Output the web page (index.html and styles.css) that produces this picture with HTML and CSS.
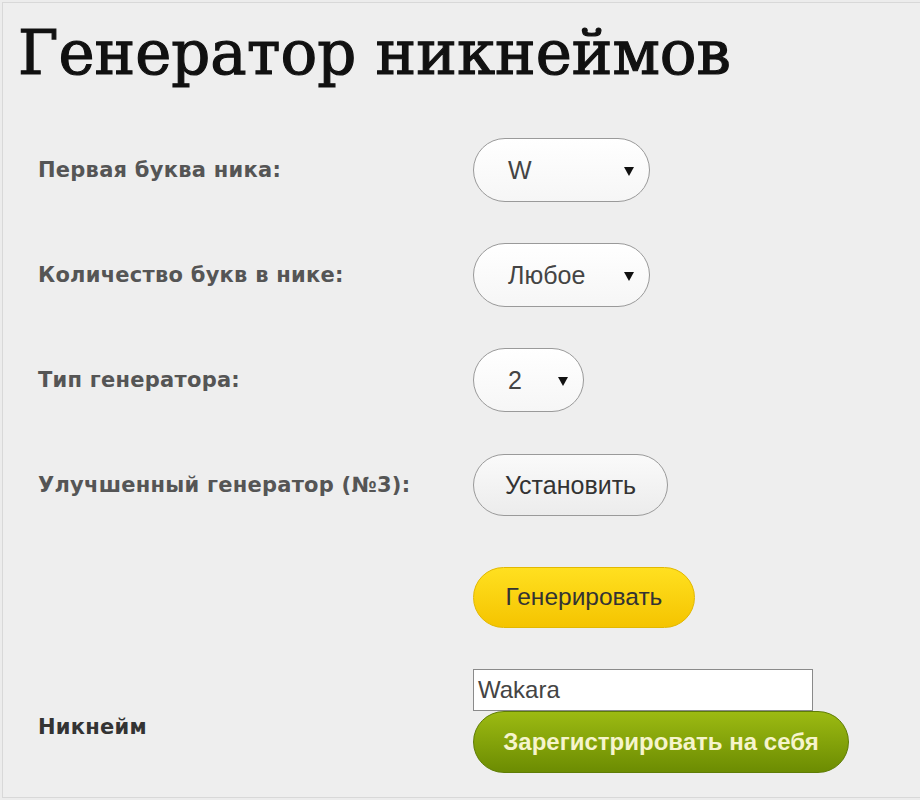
FILE: index.html
```html
<!DOCTYPE html>
<html lang="ru">
<head>
<meta charset="utf-8">
<title>Генератор никнеймов</title>
<link rel="stylesheet" href="styles.css">
</head>
<body>
<div class="page">
  <h1 class="title">Генератор никнеймов</h1>
  <div class="form">
    <div class="row">
      <div class="label">Первая буква ника:</div>
      <div class="select w177"><span class="val">W</span><svg class="arrow" width="10" height="9" viewBox="0 0 10 9"><path d="M0 0H10L5 9Z" fill="#111"/></svg></div>
    </div>
    <div class="row">
      <div class="label">Количество букв в нике:</div>
      <div class="select w177"><span class="val">Любое</span><svg class="arrow" width="10" height="9" viewBox="0 0 10 9"><path d="M0 0H10L5 9Z" fill="#111"/></svg></div>
    </div>
    <div class="row">
      <div class="label">Тип генератора:</div>
      <div class="select w111"><span class="val">2</span><svg class="arrow" width="10" height="9" viewBox="0 0 10 9"><path d="M0 0H10L5 9Z" fill="#111"/></svg></div>
    </div>
    <div class="row">
      <div class="label">Улучшенный генератор (№3):</div>
      <div class="btn btn-light">Установить</div>
    </div>
    <div class="row row-gen">
      <div class="label"></div>
      <div class="btn btn-yellow">Генерировать</div>
    </div>
    <div class="row row-nick">
      <div class="label nick-label">Никнейм</div>
      <div class="nick-col">
        <div class="input">Wakara</div>
        <div class="btn btn-green">Зарегистрировать на себя</div>
      </div>
    </div>
  </div>
</div>
</body>
</html>
```

FILE: styles.css
```css
html, body {
  margin: 0;
  padding: 0;
  background: #ececec;
}
body {
  padding: 2px 0 2px 2px;
  height: 800px;
  box-sizing: border-box;
}
.page {
  height: 796px;
  box-sizing: border-box;
  border-top: 1px solid #d8d8d8;
  border-left: 1px solid #d8d8d8;
  border-bottom: 1px solid #d8d8d8;
  background: #eeeeee;
  padding: 0 0 0 15px;
}
.title {
  margin: 0;
  padding-top: 14px;
  font-family: "DejaVu Serif", serif;
  font-weight: normal;
  font-size: 61px;
  line-height: 72px;
  color: #111;
  -webkit-text-stroke: 1.2px #111;
}
.form {
  padding-top: 49px;
  padding-left: 20px;
  display: flex;
  flex-direction: column;
}
.row {
  display: flex;
  align-items: center;
  height: 64px;
  margin-bottom: 41px;
}
.row-gen { margin-top: 7px; margin-bottom: 40px; }
.label {
  width: 435px;
  flex: none;
  font-family: "DejaVu Sans", Verdana, sans-serif;
  font-weight: bold;
  font-size: 21px;
  letter-spacing: 0.25px;
  color: #555;
}
.nick-label { color: #333; padding-top: 46px; }
.row-nick { height: auto; align-items: flex-start; }
.select {
  box-sizing: border-box;
  height: 64px;
  border: 1px solid #9a9a9a;
  border-radius: 32px;
  background: linear-gradient(#ffffff, #f6f6f6);
  display: flex;
  align-items: center;
  justify-content: space-between;
  padding: 0 15px 0 34px;
  font-family: "Liberation Sans", Arial, sans-serif;
  font-size: 25px;
  color: #444;
}
.w177 { width: 177px; }
.w111 { width: 111px; }
.arrow { flex: none; margin-top: 2px; }
.btn {
  box-sizing: border-box;
  height: 62px;
  border-radius: 31px;
  display: flex;
  align-items: center;
  justify-content: center;
  font-family: "Liberation Sans", Arial, sans-serif;
  font-size: 25px;
}
.btn-light {
  width: 195px;
  border: 1px solid #9a9a9a;
  background: linear-gradient(#fafafa, #ececec);
  color: #333;
}
.btn-yellow {
  width: 222px;
  height: 61px;
  border: 1px solid #e2b800;
  background: linear-gradient(#ffe020, #f5c400);
  color: #333;
  font-size: 24.5px;
}
.nick-col {
  display: flex;
  flex-direction: column;
}
.input {
  box-sizing: border-box;
  width: 340px;
  height: 42px;
  border: 1px solid #8a8a8a;
  background: #fff;
  font-family: "Liberation Sans", Arial, sans-serif;
  font-size: 24px;
  color: #444;
  padding: 5px 4px;
  line-height: 30px;
}
.btn-green {
  width: 376px;
  height: 62px;
  border: 1px solid #5f7d05;
  background: linear-gradient(#9cba12, #6c8c02);
  color: #f6f4cc;
  font-weight: bold;
  font-size: 24px;
}
```
